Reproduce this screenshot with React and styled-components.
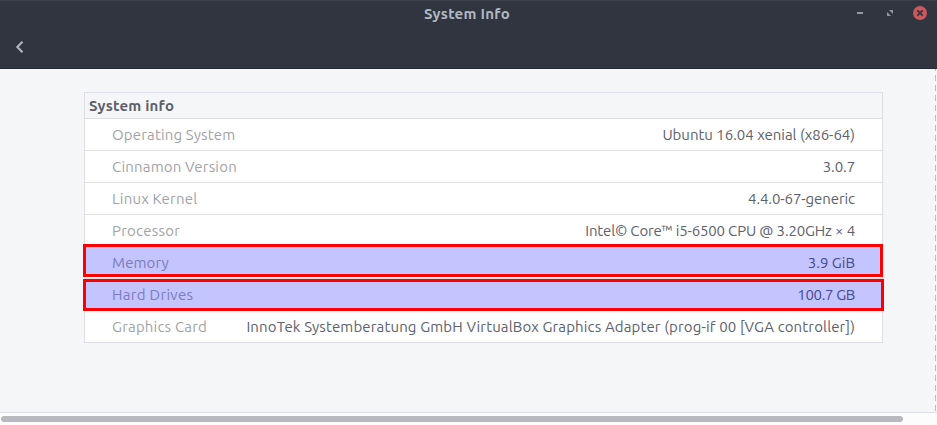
import React from "react";
import styled, { createGlobalStyle } from "styled-components";

const GlobalStyle = createGlobalStyle`
  * { box-sizing: border-box; }
  body {
    margin: 0;
    overflow: hidden;
    font: 15px/20px "Ubuntu", "Noto Sans", sans-serif;
    color: #5c616c;
    background: #f5f6f8;
  }
`;

const Window = styled.div`
  width: 937px;
  height: 425px;
  display: flex;
  flex-direction: column;
`;

const Header = styled.header`
  height: 69px;
  flex: none;
  background: #30353f;
  border-top: 1px solid #3a3f4a;
  border-bottom: 1px solid #262a33;
  color: #afb8c5;
`;

const TitleBar = styled.div`
  height: 27px;
  display: grid;
  grid-template-columns: 1fr auto 1fr;
  align-items: center;
`;

const Title = styled.h1`
  grid-column: 2;
  margin: 0 0 2px;
  padding-right: 3px;
  font-size: 15px;
  line-height: 20px;
  font-weight: 700;
  letter-spacing: 0.26px;
`;

const WindowControls = styled.div`
  justify-self: end;
  display: flex;
  align-items: center;
  padding: 0 10px 3px 0;
`;

const ControlButton = styled.button`
  width: ${(p) => p.$width}px;
  height: 14px;
  padding: 0;
  border: 0;
  background: none;
  display: flex;
  justify-content: flex-end;
  align-items: center;
`;

const Toolbar = styled.div`
  height: 38px;
  padding: 0 15px;
  display: flex;
  align-items: center;
`;

const BackButton = styled.button`
  padding: 0;
  border: 0;
  background: none;
  display: flex;
`;

const Content = styled.main`
  height: 343px;
  flex: none;
  display: flex;
  justify-content: space-between;
  padding: 23px 1px 0 84px;
  background: #f5f6f8;
`;

const DashedEdge = styled.div`
  width: 1px;
  margin-top: -23px;
  background: repeating-linear-gradient(
    #bcbec3 0 2px,
    transparent 2px 6px,
    #bcbec3 6px 10px
  );
`;

const Card = styled.section`
  width: 799px;
  height: 251px;
  border: 1px solid #dcdee3;
  background: #fff;
`;

const CardTitle = styled.h2`
  margin: 0;
  height: 26px;
  padding: 3px 0 0 4px;
  border-bottom: 1px solid #dcdee3;
  background: #f5f6f8;
  font-size: 15px;
  line-height: 20px;
  font-weight: 700;
  letter-spacing: 0.22px;
`;

const Row = styled.div`
  position: relative;
  height: 32px;
  display: flex;
  justify-content: space-between;
  padding: 6px 27px 0;
  border-bottom: 1px solid #dfe1e5;
  &:last-child { border-bottom: 0; }
`;

const Label = styled.span`
  color: #9fa3a8;
  letter-spacing: ${(p) => p.$tracking}px;
  white-space: nowrap;
`;

const Value = styled.span`
  letter-spacing: ${(p) => p.$tracking}px;
  white-space: nowrap;
`;

const Highlight = styled.div`
  position: absolute;
  left: -2px;
  top: ${(p) => p.$top}px;
  width: ${(p) => p.$width}px;
  height: ${(p) => p.$height}px;
  border: 3px solid #ff0000;
  background: rgba(0, 0, 255, 0.23);
  background-clip: padding-box;
`;

const ScrollTrack = styled.div`
  height: 13px;
  flex: none;
  padding: 3px 0 0 1px;
  border-top: 1px solid #dcdee3;
  background: #fcfcfc;
`;

const ScrollThumb = styled.div`
  width: 902px;
  height: 6px;
  border-radius: 3px;
  background: #b8b9be;
`;

const rows = [
  { label: "Operating System", lt: 0.16, value: "Ubuntu 16.04 xenial (x86-64)", vt: -0.02 },
  { label: "Cinnamon Version", lt: 0.19, value: "3.0.7", vt: -0.1 },
  { label: "Linux Kernel", lt: 0.18, value: "4.4.0-67-generic", vt: -0.09 },
  { label: "Processor", lt: 0.22, value: "Intel© Core™ i5-6500 CPU @ 3.20GHz × 4", vt: -0.16 },
  { label: "Memory", lt: 0.1, value: "3.9 GiB", vt: 0 },
  { label: "Hard Drives", lt: 0.3, value: "100.7 GB", vt: -0.35 },
  {
    label: "Graphics Card",
    lt: 0.19,
    value: "InnoTek Systemberatung GmbH VirtualBox Graphics Adapter (prog-if 00 [VGA controller])",
    vt: 0.135,
  },
];

const marks = {
  Memory: { top: -3, width: 800, height: 33 },
  "Hard Drives": { top: 0, width: 801, height: 32 },
};

function Controls() {
  return (
    <WindowControls>
      <ControlButton $width={6} aria-label="Minimize">
        <svg width="6" height="6">
          <path d="M0 2h6v2H0z" fill="#9198a3" />
        </svg>
      </ControlButton>
      <ControlButton $width={30} aria-label="Restore">
        <svg width="6" height="6">
          <path d="M2 0h4v4zM0 2l4 4H0z" fill="#9198a3" />
        </svg>
      </ControlButton>
      <ControlButton $width={34} aria-label="Close">
        <svg width="14" height="14">
          <circle cx="7" cy="7" r="7" fill="#cc575d" />
          <path d="M4.3 4.3l5.4 5.4M9.7 4.3l-5.4 5.4" stroke="#30353f" strokeWidth="1.8" />
        </svg>
      </ControlButton>
    </WindowControls>
  );
}

export default function App() {
  return (
    <Window>
      <GlobalStyle />
      <Header>
        <TitleBar>
          <Title>System Info</Title>
          <Controls />
        </TitleBar>
        <Toolbar>
          <BackButton aria-label="Back">
            <svg width="9" height="12">
              <path d="M7.5 0.8L2.3 6l5.2 5.2" fill="none" stroke="#afb8c5" strokeWidth="2" />
            </svg>
          </BackButton>
        </Toolbar>
      </Header>
      <Content>
        <Card>
          <CardTitle>System info</CardTitle>
          {rows.map((r) => {
            const mark = marks[r.label];
            return (
              <Row key={r.label}>
                <Label $tracking={r.lt}>{r.label}</Label>
                <Value $tracking={r.vt}>{r.value}</Value>
                {mark && <Highlight $top={mark.top} $width={mark.width} $height={mark.height} />}
              </Row>
            );
          })}
        </Card>
        <DashedEdge />
      </Content>
      <ScrollTrack>
        <ScrollThumb />
      </ScrollTrack>
    </Window>
  );
}
